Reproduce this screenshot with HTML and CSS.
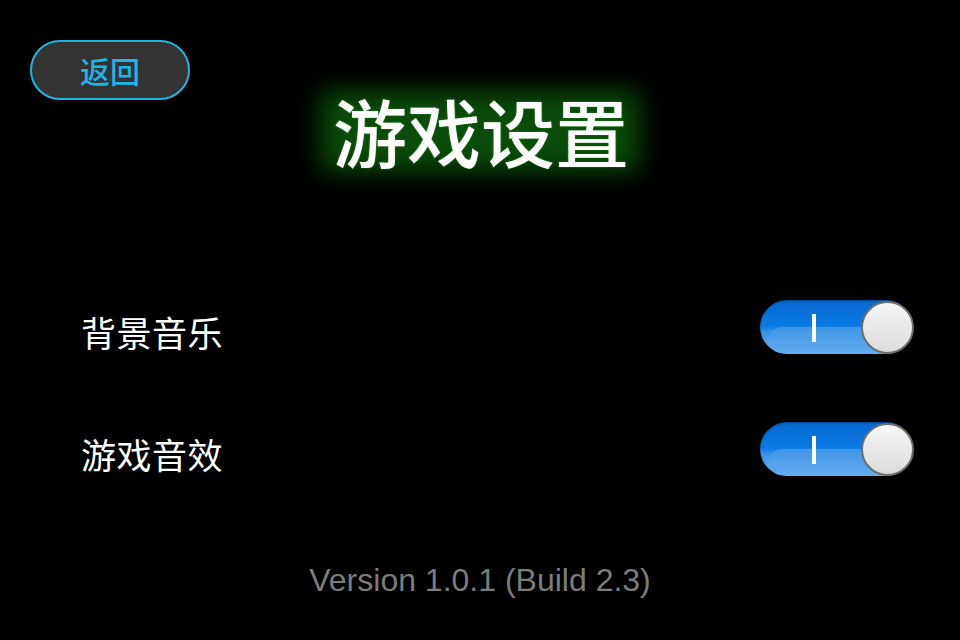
FILE: index.html
```html
<!DOCTYPE html>
<html lang="zh">
<head>
<meta charset="utf-8">
<title>游戏设置</title>
<link rel="stylesheet" href="styles.css">
</head>
<body>
<div class="screen">
  <div class="header">
    <button class="back">返回</button>
  </div>
  <h1 class="title"><span class="title-text">游戏设置</span></h1>
  <div class="settings">
    <div class="row">
      <span class="label">背景音乐</span>
      <div class="toggle"><span class="on-mark"></span><span class="knob"></span></div>
    </div>
    <div class="row">
      <span class="label">游戏音效</span>
      <div class="toggle"><span class="on-mark"></span><span class="knob"></span></div>
    </div>
  </div>
  <div class="version">Version 1.0.1 (Build 2.3)</div>
</div>
</body>
</html>
```
FILE: styles.css
```css
html, body {
  margin: 0;
  padding: 0;
  background: #000;
}
.screen {
  width: 960px;
  height: 640px;
  display: flex;
  flex-direction: column;
  padding-top: 40px;
  box-sizing: border-box;
  font-family: "Noto Sans CJK SC", "Noto Sans", sans-serif;
  color: #fff;
  overflow: hidden;
}
.header {
  display: flex;
  padding-left: 30px;
}
.back {
  width: 160px;
  height: 60px;
  box-sizing: border-box;
  border: 2px solid #1fb6de;
  border-radius: 30px;
  background: #333;
  color: #1fb4e4;
  font-family: "Noto Sans CJK SC", sans-serif;
  font-size: 30px;
  font-weight: 500;
  line-height: 1;
  padding: 0;
  display: flex;
  align-items: center;
  justify-content: center;
}
.title {
  margin: -11px 0 0 0;
  display: flex;
  justify-content: center;
  font-size: 74px;
  font-weight: 500;
  line-height: 74px;
  color: #fff;
}
.title-text {
  position: relative;
  z-index: 0;
  display: block;
  padding: 4px 10px 4px 12px;
  text-shadow: 0 0 2px #2f8f2f;
}
.title-text::before {
  content: "";
  position: absolute;
  inset: 2px 0 0 0;
  z-index: -1;
  background: #0a4c0a;
  filter: blur(13px);
}
.settings {
  display: flex;
  flex-direction: column;
  gap: 68px;
  margin-top: 129px;
  padding: 0 47px 0 81px;
}
.row {
  display: flex;
  align-items: center;
  justify-content: space-between;
  height: 54px;
}
.label {
  font-size: 35px;
  line-height: 1;
  margin-top: 8px;
  letter-spacing: 0.5px;
}
.toggle {
  position: relative;
  width: 153px;
  height: 54px;
  box-sizing: border-box;
  border-radius: 27px;
  background: linear-gradient(#0768cf, #0a7ae6 48%, #1683ea 52%, #3b95e6 60%, #68b2f2);
  box-shadow: inset 0 1px 2px rgba(0,0,0,0.35);
  display: flex;
  align-items: center;
  justify-content: flex-end;
}
.toggle::before {
  content: "";
  position: absolute;
  left: 9px;
  right: 20px;
  top: 27px;
  bottom: 1px;
  border-radius: 20px 0 0 20px;
  background: linear-gradient(#3f95e4, #62abef);
}
.on-mark {
  position: absolute;
  left: 52px;
  top: 14px;
  width: 4px;
  height: 28px;
  background: #fff;
  z-index: 1;
}
.knob {
  position: relative;
  z-index: 2;
  width: 53px;
  height: 53px;
  box-sizing: border-box;
  border-radius: 50%;
  border: 2px solid #6e6e6e;
  background: linear-gradient(#f6f6f6, #dcdcdc);
  margin-right: -1px;
}
.version {
  margin-top: 86px;
  text-align: center;
  font-family: "Liberation Sans", Arial, sans-serif;
  font-size: 32px;
  line-height: 36px;
  color: #7c7c7c;
  padding-left: 0;
}
```
